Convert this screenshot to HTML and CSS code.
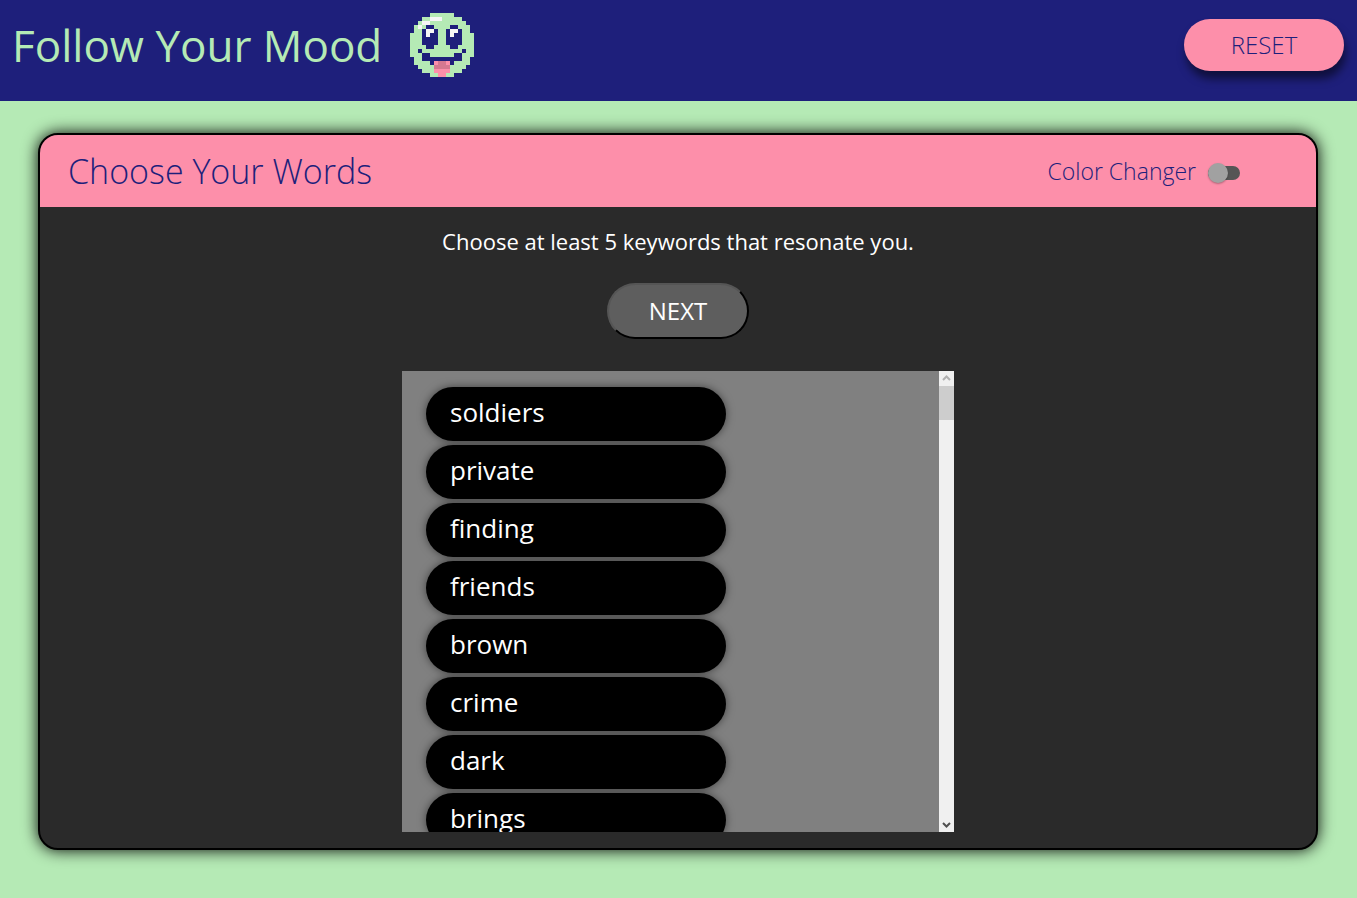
FILE: index.html
```
<!DOCTYPE html>
<html lang="en">
<head>
<meta charset="utf-8">
<title>Follow Your Mood</title>
<link rel="stylesheet" href="styles.css">
</head>
<body>
<header class="topbar">
  <div class="brand">
    <h1 class="brand-title">Follow Your Mood</h1>
    <svg class="face" viewBox="0 0 16 16" shape-rendering="crispEdges" aria-hidden="true">
      <path fill="#b5eab5" d="M5 0h6v1h2v1h1v1h1v2h1v6h-1v2h-1v1h-1v1h-2v1H5v-1H3v-1H2v-1H1v-2H0V5h1V3h1V2h1V1h2z"/>
      <path fill="#f5f5f5" d="M5 1h3v1H5zM3 2h2v1H3zM2 3h1v1H2z"/>
      <path fill="#1e1f7b" d="M4 3h2v1h1v4H6v1H4V8H3V4h1zM10 3h2v1h1v4h-1v1h-2V8H9V4h1zM2 9h1v1H2zM13 9h1v1h-1zM3 10h2v1h6v-1h2v2h-2v1H5v-1H3z"/>
      <path fill="#f5f5f5" d="M4 4h2v1H5v1H4zM10 4h2v1h-1v1h-1z"/>
      <path fill="#fd8faa" d="M6 12h4v3H9v1H7v-1H6z"/>
      <path fill="#d67890" d="M7 12h2v1h1v1H6v-1h1z"/>
    </svg>
  </div>
  <button class="reset" type="button">RESET</button>
</header>
<main class="card">
  <div class="card-head">
    <h2 class="card-title">Choose Your Words</h2>
    <label class="changer">Color Changer <input class="switch" type="checkbox" role="switch"></label>
  </div>
  <div class="card-body">
    <p class="hint">Choose at least 5 keywords that resonate you.</p>
    <button class="next" type="button">NEXT</button>
    <div class="picker">
      <div class="words">
        <button class="word" type="button">soldiers</button>
        <button class="word" type="button">private</button>
        <button class="word" type="button">finding</button>
        <button class="word" type="button">friends</button>
        <button class="word" type="button">brown</button>
        <button class="word" type="button">crime</button>
        <button class="word" type="button">dark</button>
        <button class="word" type="button">brings</button>
      </div>
      <div class="scrollbar" aria-hidden="true">
        <svg class="arrow arrow-up" viewBox="0 0 15 15"><path d="M4 9l3.500-3.500L11 9"/></svg>
        <div class="track"><div class="thumb"></div></div>
        <svg class="arrow arrow-down" viewBox="0 0 15 15"><path d="M4 6l3.500 3.500L11 6"/></svg>
      </div>
    </div>
  </div>
</main>
</body>
</html>
```
FILE: styles.css
```
* { box-sizing: border-box; }

body {
  margin: 0;
  min-height: 100vh;
  background: #b5eab5;
  color: #1e1f7b;
  font-family: "Open Sans", "Noto Sans", sans-serif;
}

h1, h2, p { margin: 0; font-weight: 300; }

button { font-family: inherit; cursor: pointer; }

.topbar {
  display: flex;
  justify-content: space-between;
  align-items: flex-start;
  padding: 13px 13px 24px 12px;
  background: #1e1f7b;
}

.brand { display: flex; align-items: center; gap: 28px; }

.brand-title {
  color: #b5eab5;
  font-size: 44px;
  line-height: 64px;
  font-weight: 400;
}

.face { width: 64px; height: 64px; }

.reset {
  width: 160px;
  height: 52px;
  margin-top: 6px;
  padding: 0 0 2px 0;
  border: 0;
  border-radius: 26px;
  background: #fd8faa;
  color: #1e1f7b;
  font-size: 24px;
  font-weight: 300;
  box-shadow: 2px 8px 8px rgba(0, 0, 0, 0.5);
}

.card {
  margin: 32px 39px 48px 38px;
  border: 2px solid #000;
  border-radius: 20px;
  background: #2a2a2a;
  box-shadow: 0 0 16px #000;
  overflow: hidden;
}

.card-head {
  display: flex;
  justify-content: space-between;
  align-items: center;
  height: 72px;
  padding: 0 76px 0 28px;
  background: #fd8faa;
}

.card-title { font-size: 34px; }

.changer {
  display: flex;
  align-items: center;
  gap: 12px;
  font-size: 23px;
  font-weight: 300;
}

.switch {
  appearance: none;
  position: relative;
  width: 32px;
  height: 14px;
  margin: 4px 0 0;
  border-radius: 7px;
  background: #555;
}

.switch::before {
  content: "";
  position: absolute;
  left: 0;
  top: -3px;
  width: 20px;
  height: 20px;
  border-radius: 50%;
  background: #a1a1a1;
  box-shadow: 0 1px 2px rgba(0, 0, 0, 0.3);
}

.card-body {
  display: flex;
  flex-direction: column;
  align-items: center;
  padding: 16px;
}

.hint {
  color: #fff;
  font-size: 22px;
  line-height: 36px;
  font-weight: 400;
}

.next {
  width: 142px;
  height: 56px;
  margin: 24px 0 32px;
  padding: 0 0 2px 0;
  border: 2px solid;
  border-color: #555 #000 #000 #555;
  border-radius: 28px;
  background: #5e5e5e;
  color: #fff;
  font-size: 24px;
}

.picker {
  display: flex;
  width: 552px;
  max-width: 100%;
  height: 461px;
  background: #808080;
}

.words {
  flex: 1;
  display: flex;
  flex-direction: column;
  gap: 4px;
  padding: 16px 24px;
  overflow-y: scroll;
  scrollbar-width: none;
}

.word {
  flex: none;
  width: 300px;
  height: 54px;
  padding: 0 24px 4px;
  border: 0;
  border-radius: 27px;
  background: #000;
  color: #fff;
  font-size: 26px;
  text-align: left;
  box-shadow: 0 0 8px rgba(0, 0, 0, 0.5);
}

.scrollbar {
  display: flex;
  flex-direction: column;
  width: 15px;
  background: #f0f0f0;
}

.arrow {
  width: 15px;
  height: 15px;
  fill: none;
  stroke-width: 2;
}

.arrow-up { stroke: #b0b0b0; }
.arrow-down { stroke: #505050; }

.track { flex: 1; }
.thumb { height: 34px; background: #cdcdcd; }
```
